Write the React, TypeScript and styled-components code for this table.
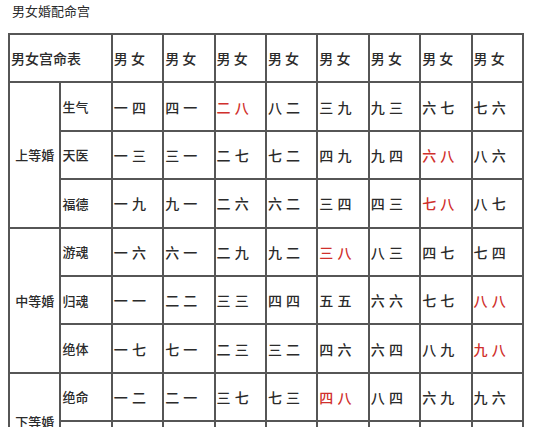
import React from 'react'
import styled, { createGlobalStyle } from 'styled-components'

const GlobalStyle = createGlobalStyle`
  html, body {
    margin: 0;
    padding: 0;
    background: #ffffff;
  }
  body {
    font-family: "Noto Sans CJK SC", "Noto Sans", sans-serif;
    color: #2b2b2b;
  }
`

const Page = styled.div`
  width: 534px;
  height: 427px;
  overflow: hidden;
  background: #ffffff;
`

const Title = styled.div`
  box-sizing: border-box;
  height: 33px;
  padding: 3px 0 0 12px;
  font-size: 13px;
  line-height: 16px;
  color: #2b2b2b;
`

const Grid = styled.table`
  margin-left: 8px;
  width: 516px;
  table-layout: fixed;
  border-collapse: collapse;
  border: 2px solid #565656;

  tr {
    height: 48.4px;
  }
`

const Cell = styled.td`
  border: 2px solid #565656;
  padding: 0 0 0 1px;
  vertical-align: middle;
  white-space: nowrap;
  overflow: hidden;
  font-size: 14px;
  font-weight: 500;
  color: #2b2b2b;
`

const HeadCell = styled(Cell)`
  font-size: 14px;
`

const GroupCell = styled(Cell)`
  text-align: center;
  font-size: 13px;
  padding: 0;
`

const LabelCell = styled(Cell)`
  font-size: 13px;
`

const ValueCell = styled(Cell)<{ $red?: boolean }>`
  color: ${p => (p.$red ? '#d0302c' : '#2b2b2b')};
  word-spacing: 1px;
`

type Row = { label: string; values: string[]; red: number }
type Group = { name: string; rows: Row[] }

const groups: Group[] = [
  {
    name: '上等婚',
    rows: [
      { label: '生气', values: ['一 四', '四 一', '二 八', '八 二', '三 九', '九 三', '六 七', '七 六'], red: 2 },
      { label: '天医', values: ['一 三', '三 一', '二 七', '七 二', '四 九', '九 四', '六 八', '八 六'], red: 6 },
      { label: '福德', values: ['一 九', '九 一', '二 六', '六 二', '三 四', '四 三', '七 八', '八 七'], red: 6 },
    ],
  },
  {
    name: '中等婚',
    rows: [
      { label: '游魂', values: ['一 六', '六 一', '二 九', '九 二', '三 八', '八 三', '四 七', '七 四'], red: 4 },
      { label: '归魂', values: ['一 一', '二 二', '三 三', '四 四', '五 五', '六 六', '七 七', '八 八'], red: 7 },
      { label: '绝体', values: ['一 七', '七 一', '二 三', '三 二', '四 六', '六 四', '八 九', '九 八'], red: 7 },
    ],
  },
  {
    name: '下等婚',
    rows: [
      { label: '绝命', values: ['一 二', '二 一', '三 七', '七 三', '四 八', '八 四', '六 九', '九 六'], red: 4 },
      { label: '', values: ['', '', '', '', '', '', '', ''], red: -1 },
    ],
  },
]

const App: React.FunctionComponent = () => {
  return (
    <Page>
      <GlobalStyle />
      <Title>男女婚配命宫</Title>
      <Grid>
        <colgroup>
          {Array.from({ length: 10 }).map((_, i) => (
            <col key={i} />
          ))}
        </colgroup>
        <tbody>
          <tr>
            <HeadCell colSpan={2}>男女宫命表</HeadCell>
            {Array.from({ length: 8 }).map((_, i) => (
              <HeadCell key={i}>男 女</HeadCell>
            ))}
          </tr>
          {groups.map(group =>
            group.rows.map((row, ri) => (
              <tr key={group.name + ri}>
                {ri === 0 && <GroupCell rowSpan={group.rows.length}>{group.name}</GroupCell>}
                <LabelCell>{row.label}</LabelCell>
                {row.values.map((v, vi) => (
                  <ValueCell key={vi} $red={vi === row.red}>
                    {v}
                  </ValueCell>
                ))}
              </tr>
            ))
          )}
        </tbody>
      </Grid>
    </Page>
  )
}

export default App
